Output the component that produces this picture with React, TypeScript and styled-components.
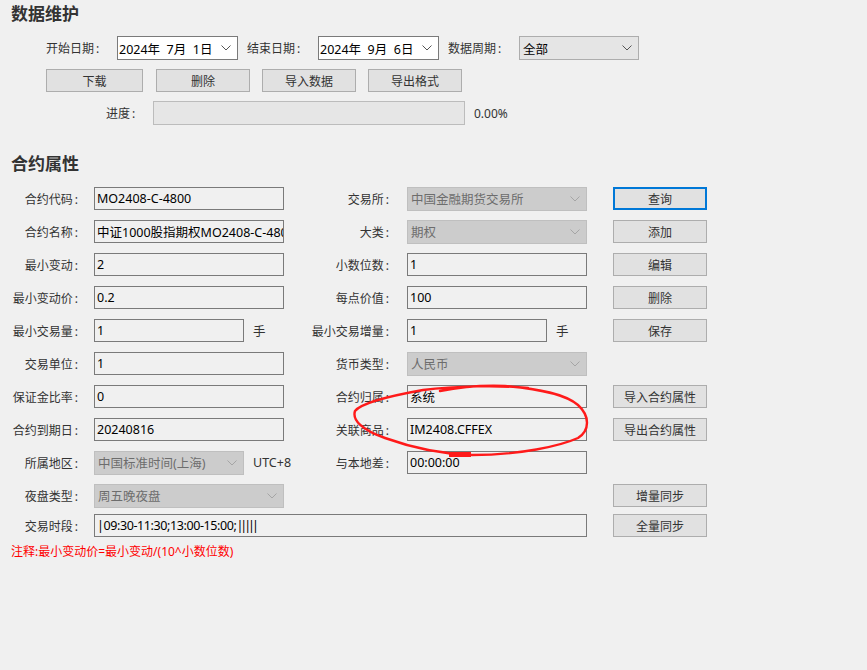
import * as React from 'react';
import styled, { createGlobalStyle } from 'styled-components';

const GlobalStyle = createGlobalStyle`
  html, body {
    margin: 0;
    padding: 0;
    background: #f0f0f0;
  }
  body {
    font-family: "Noto Sans", "Noto Sans CJK SC", "Liberation Sans", sans-serif;
    font-size: 12px;
    color: #333;
  }
`;

const Page = styled.div`
  position: relative;
  width: 867px;
  height: 670px;
  overflow: hidden;
`;

const SectionTitle = styled.h2<{ $top: number }>`
  margin: ${p => p.$top}px 0 0 11px;
  height: 28px;
  line-height: 28px;
  font-size: 17px;
  font-weight: 700;
  color: #333;
`;

const TopRow = styled.div<{ $top: number; $h: number; $indent?: number }>`
  display: flex;
  align-items: center;
  margin-top: ${p => p.$top}px;
  height: ${p => p.$h}px;
  padding-left: ${p => p.$indent ?? 46}px;
`;

const TopLabel = styled.span<{ $w: number; $ml?: number }>`
  width: ${p => p.$w}px;
  margin-left: ${p => p.$ml ?? 0}px;
  flex: none;
  white-space: nowrap;
`;

// the colon sits a little apart from the label text, as in the WinForms font
const Colon = styled.span`
  margin-left: 2px;
  margin-right: 1px;
`;

const Box = styled.div<{ $w: number; $h?: number }>`
  box-sizing: border-box;
  display: flex;
  align-items: center;
  flex: none;
  width: ${p => p.$w}px;
  height: ${p => p.$h ?? 23}px;
  white-space: pre;
  overflow: hidden;
  font-size: 12.5px;
`;

const DateBox = styled(Box)`
  background: #fff;
  border: 1px solid #7a7a7a;
  padding: 0 6px 0 1px;
  color: #000;
  justify-content: space-between;
`;

const ComboBox = styled(Box)<{ $disabled?: boolean }>`
  background: ${p => (p.$disabled ? '#cccccc' : '#e5e5e5')};
  border: 1px solid ${p => (p.$disabled ? '#bfbfbf' : '#adadad')};
  color: ${p => (p.$disabled ? '#6d6d6d' : '#000')};
  padding: 0 6px 0 3px;
  justify-content: space-between;
`;

const TextBox = styled(Box)`
  background: #f0f0f0;
  border: 1px solid #7a7a7a;
  padding: 0 0 0 2px;
  color: #000;
`;

const TimeText = styled.span`
  letter-spacing: -0.4px;
`;

const Bars = styled.span`
  letter-spacing: -3px;
`;

const Button = styled.button<{ $w: number; $focused?: boolean }>`
  box-sizing: border-box;
  flex: none;
  width: ${p => p.$w}px;
  height: 23px;
  margin: 0;
  padding: 0;
  background: #e1e1e1;
  border: ${p => (p.$focused ? '2px solid #0078d7' : '1px solid #adadad')};
  font-family: inherit;
  font-size: 12px;
  color: #333;
`;

const ProgressBar = styled.div`
  box-sizing: border-box;
  width: 312px;
  height: 24px;
  background: #e6e6e6;
  border: 1px solid #bcbcbc;
  flex: none;
`;

const Percent = styled.span`
  margin-left: 9px;
`;

const Form = styled.div`
  display: flex;
  flex-direction: column;
  gap: 10px;
  margin-top: 9px;
`;

const FormRow = styled.div<{ $tight?: boolean }>`
  display: flex;
  align-items: center;
  height: 23px;
  margin-top: ${p => (p.$tight ? -3 : 0)}px;
`;

const FieldLabel = styled.span<{ $w: number }>`
  width: ${p => p.$w}px;
  flex: none;
  text-align: right;
  white-space: nowrap;
`;

const LeftField = styled.div`
  display: flex;
  align-items: center;
  width: 190px;
  margin-left: 15px;
  flex: none;
`;

const MidField = styled.div`
  display: flex;
  align-items: center;
  width: 180px;
  margin-left: 17px;
  flex: none;
`;

const Unit = styled.span`
  margin-left: 9px;
  white-space: nowrap;
  font-size: 12.5px;
`;

const ButtonSlot = styled.div<{ $ml: number }>`
  margin-left: ${p => p.$ml}px;
  display: flex;
`;

const Note = styled.div`
  margin: 7px 0 0 11px;
  line-height: 16px;
  color: #ff0000;
`;

const Annotation = styled.svg`
  position: absolute;
  left: 0;
  top: 0;
  pointer-events: none;
`;

const Chevron = ({ muted }: { muted?: boolean }) => (
  <svg width="10" height="6" viewBox="0 0 10 6">
    <polyline points="0.5,0.5 5,5 9.5,0.5" fill="none" stroke={muted ? '#a5a5a5' : '#555'} strokeWidth="1" />
  </svg>
);

const Label = ({ w, text }: { w: number; text: string }) => (
  <FieldLabel $w={w}>
    {text}
    <Colon>:</Colon>
  </FieldLabel>
);

export default function App() {
  return (
    <Page>
      <GlobalStyle />
      <SectionTitle $top={0}>数据维护</SectionTitle>

      <TopRow $top={8} $h={24}>
        <TopLabel $w={71}>开始日期<Colon>:</Colon></TopLabel>
        <DateBox $w={121} $h={24}>
          <span>2024年  7月  1日</span>
          <Chevron />
        </DateBox>
        <TopLabel $w={71} $ml={9}>结束日期<Colon>:</Colon></TopLabel>
        <DateBox $w={121} $h={24}>
          <span>2024年  9月  6日</span>
          <Chevron />
        </DateBox>
        <TopLabel $w={71} $ml={9}>数据周期<Colon>:</Colon></TopLabel>
        <ComboBox $w={120} $h={24}>
          <span>全部</span>
          <Chevron />
        </ComboBox>
      </TopRow>

      <TopRow $top={9} $h={23}>
        <Button $w={97}>下载</Button>
        <ButtonSlot $ml={13}><Button $w={94}>删除</Button></ButtonSlot>
        <ButtonSlot $ml={12}><Button $w={94}>导入数据</Button></ButtonSlot>
        <ButtonSlot $ml={12}><Button $w={94}>导出格式</Button></ButtonSlot>
      </TopRow>

      <TopRow $top={9} $h={24} $indent={106}>
        <TopLabel $w={47}>进度<Colon>:</Colon></TopLabel>
        <ProgressBar />
        <Percent>0.00%</Percent>
      </TopRow>

      <SectionTitle $top={25}>合约属性</SectionTitle>

      <Form>
        <FormRow>
          <Label w={79} text="合约代码" />
          <LeftField><TextBox $w={190}>MO2408-C-4800</TextBox></LeftField>
          <Label w={106} text="交易所" />
          <MidField>
            <ComboBox $w={180} $h={24} $disabled><span>中国金融期货交易所</span><Chevron muted /></ComboBox>
          </MidField>
          <ButtonSlot $ml={26}><Button $w={94} $focused>查询</Button></ButtonSlot>
        </FormRow>
        <FormRow>
          <Label w={79} text="合约名称" />
          <LeftField><TextBox $w={190}>中证1000股指期权MO2408-C-4800</TextBox></LeftField>
          <Label w={106} text="大类" />
          <MidField>
            <ComboBox $w={180} $h={24} $disabled><span>期权</span><Chevron muted /></ComboBox>
          </MidField>
          <ButtonSlot $ml={26}><Button $w={94}>添加</Button></ButtonSlot>
        </FormRow>
        <FormRow>
          <Label w={79} text="最小变动" />
          <LeftField><TextBox $w={190}>2</TextBox></LeftField>
          <Label w={106} text="小数位数" />
          <MidField><TextBox $w={180}>1</TextBox></MidField>
          <ButtonSlot $ml={26}><Button $w={94}>编辑</Button></ButtonSlot>
        </FormRow>
        <FormRow>
          <Label w={79} text="最小变动价" />
          <LeftField><TextBox $w={190}>0.2</TextBox></LeftField>
          <Label w={106} text="每点价值" />
          <MidField><TextBox $w={180}>100</TextBox></MidField>
          <ButtonSlot $ml={26}><Button $w={94}>删除</Button></ButtonSlot>
        </FormRow>
        <FormRow>
          <Label w={79} text="最小交易量" />
          <LeftField><TextBox $w={150}>1</TextBox><Unit>手</Unit></LeftField>
          <Label w={106} text="最小交易增量" />
          <MidField><TextBox $w={140}>1</TextBox><Unit>手</Unit></MidField>
          <ButtonSlot $ml={26}><Button $w={94}>保存</Button></ButtonSlot>
        </FormRow>
        <FormRow>
          <Label w={79} text="交易单位" />
          <LeftField><TextBox $w={190}>1</TextBox></LeftField>
          <Label w={106} text="货币类型" />
          <MidField>
            <ComboBox $w={180} $h={24} $disabled><span>人民币</span><Chevron muted /></ComboBox>
          </MidField>
        </FormRow>
        <FormRow>
          <Label w={79} text="保证金比率" />
          <LeftField><TextBox $w={190}>0</TextBox></LeftField>
          <Label w={106} text="合约归属" />
          <MidField><TextBox $w={180}>系统</TextBox></MidField>
          <ButtonSlot $ml={26}><Button $w={94}>导入合约属性</Button></ButtonSlot>
        </FormRow>
        <FormRow>
          <Label w={79} text="合约到期日" />
          <LeftField><TextBox $w={190}>20240816</TextBox></LeftField>
          <Label w={106} text="关联商品" />
          <MidField><TextBox $w={180}>IM2408.CFFEX</TextBox></MidField>
          <ButtonSlot $ml={26}><Button $w={94}>导出合约属性</Button></ButtonSlot>
        </FormRow>
        <FormRow>
          <Label w={79} text="所属地区" />
          <LeftField>
            <ComboBox $w={150} $h={24} $disabled><span>中国标准时间(上海)</span><Chevron muted /></ComboBox>
            <Unit>UTC+8</Unit>
          </LeftField>
          <Label w={106} text="与本地差" />
          <MidField><TextBox $w={180}>00:00:00</TextBox></MidField>
        </FormRow>
        <FormRow>
          <Label w={79} text="夜盘类型" />
          <LeftField>
            <ComboBox $w={190} $h={24} $disabled><span>周五晚夜盘</span><Chevron muted /></ComboBox>
          </LeftField>
          <ButtonSlot $ml={329}><Button $w={94}>增量同步</Button></ButtonSlot>
        </FormRow>
        <FormRow $tight>
          <Label w={79} text="交易时段" />
          <LeftField>
            <TextBox $w={493}>
              <TimeText>|09:30-11:30;13:00-15:00;</TimeText>
              <Bars>|||||</Bars>
            </TextBox>
          </LeftField>
          <ButtonSlot $ml={329}><Button $w={94}>全量同步</Button></ButtonSlot>
        </FormRow>
      </Form>

      <Note>注释:最小变动价=最小变动/(10^小数位数)</Note>

      <Annotation width="867" height="670" viewBox="0 0 867 670">
        <path
          d="M 528 388 C 500 385, 455 386, 423 390 C 395 395, 362 402, 355 411 C 352 420, 362 430, 385 438 C 410 447, 440 454, 472 455 C 520 455, 560 446, 578 438 C 590 430, 590 416, 578 405 C 565 394, 540 389, 505 386 C 480 385, 460 387, 440 391"
          fill="none"
          stroke="#ff1a1a"
          strokeWidth="2.4"
          strokeLinecap="round"
        />
        <path d="M 449 454.5 L 471 454.5" stroke="#ff1a1a" strokeWidth="5" />
      </Annotation>
    </Page>
  );
}
